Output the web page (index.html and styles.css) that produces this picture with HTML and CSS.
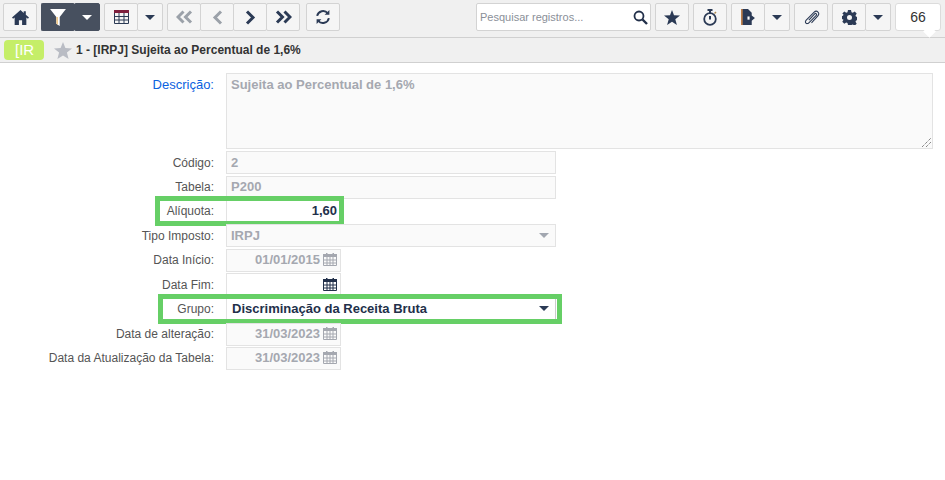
FILE: index.html
```html
<!DOCTYPE html>
<html lang="pt">
<head>
<meta charset="utf-8">
<title>Sujeita ao Percentual de 1,6%</title>
<link rel="stylesheet" href="styles.css">
</head>
<body>
<header class="toolbar">
  <div class="group">
    <button class="btn w34"><svg width="17" height="15" viewBox="0 0 16 14"><path class="ic" d="M8 0 0 7l1 1.200L2.500 7v7h4V9.500h3V14h4V7L15 8.200 16 7l-3-2.600V1h-2v1.700z"/></svg></button>
  </div>
  <div class="group gap4">
    <button class="btn dark w34 div-dark"><svg width="16" height="17" viewBox="0 0 14 15"><path fill="#fff" d="M0 0h14L8.500 7v8l-3-2V7z"/><path fill="#f0c98c" d="M5.500 7H7v7l-1.500-1z"/></svg></button>
    <button class="btn dark w25 first-none"><i class="caret white"></i></button>
  </div>
  <div class="group gap4">
    <button class="btn w33"><svg width="15" height="14" viewBox="0 0 15 14"><path fill="#7d1f3d" d="M0 0h15v3H0z"/><path fill="none" stroke="#2b3a55" d="M.5 3v10.500h14V3M.5 6.500h14M.5 10h14M5 3v10.500M10 3v10.500"/></svg></button>
    <button class="btn w25 first-none"><i class="caret"></i></button>
  </div>
  <div class="group gap4">
    <button class="btn w33"><svg width="17" height="14" viewBox="0 0 17 14"><path class="chev mute" d="M7.500 1.500 2 7l5.500 5.500M15 1.500 9.500 7l5.500 5.500"/></svg></button>
    <button class="btn w33 first-none"><svg width="11" height="15" viewBox="0 0 11 15"><path class="chev mute" d="M9 1.500 3 7.500l6 6"/></svg></button>
    <button class="btn w33 first-none"><svg width="11" height="15" viewBox="0 0 11 15"><path class="chev" d="m2 1.500 6 6-6 6"/></svg></button>
    <button class="btn w33 first-none"><svg width="17" height="14" viewBox="0 0 17 14"><path class="chev" d="M2 1.500 7.500 7 2 12.500M9.500 1.500 15 7l-5.500 5.500"/></svg></button>
  </div>
  <div class="group gap6">
    <button class="btn w34"><svg width="16" height="16" viewBox="0 0 15 15"><path fill="none" stroke="#2b3a55" stroke-width="1.800" d="M2 6.500A5.700 5.700 0 0 1 12 4M13 8.500A5.700 5.700 0 0 1 3 11"/><path class="ic" d="M13.500 1v4.500H9zM1.500 14V9.500H6z"/></svg></button>
  </div>
  <div class="spacer"></div>
  <div class="search"><span>Pesquisar registros...</span><svg width="15" height="15" viewBox="0 0 15 15"><circle cx="6" cy="6" r="4.500" fill="none" stroke="#22304a" stroke-width="1.800"/><path stroke="#22304a" stroke-width="2.400" d="m9.500 9.500 4.500 4.500"/></svg></div>
  <button class="btn w34 ml4"><svg width="16" height="15" viewBox="0 0 16 15"><path class="ic" d="m8 0 2 5.300 6 .3-4.700 3.600L12.900 15 8 11.700 3.100 15l1.600-5.800L0 5.600l6-.3z"/></svg></button>
  <button class="btn w34 ml4"><svg width="15" height="17" viewBox="0 0 15 17"><circle cx="7" cy="10" r="5.800" fill="none" stroke="#2b3a55" stroke-width="1.800"/><path stroke="#2b3a55" stroke-width="2" d="M4.500 1h5M7 2v2M7 7v3.500"/><path stroke="#b08a50" stroke-width="1.500" d="m11.500 4.500 1.500-1.500"/></svg></button>
  <div class="group ml4">
    <button class="btn w33"><svg width="14" height="16" viewBox="0 0 13 15"><path class="ic" d="M0 0h6.500L10 3.500V6l3 2.500L10 11v4H0z"/><path fill="#c8844a" d="M0 0h1.500v15H0z"/><path fill="#fff" d="M6 7h2v3H6z"/></svg></button>
    <button class="btn w26 first-none"><i class="caret"></i></button>
  </div>
  <button class="btn w34 ml4"><svg width="17" height="17" viewBox="0 0 16 16"><path fill="none" stroke="#2b3a55" stroke-width="1" d="M5.500 10.500 11 4.500c1-1 2.500.5 1.500 1.500L5.500 13c-2 2-4.500-.5-2.500-2.500L10.500 3c2.500-2.500 6 1 3.500 3.500L8 13"/></svg></button>
  <div class="group ml4">
    <button class="btn w33"><svg width="15" height="15" viewBox="0 0 15 15"><path class="ic" fill-rule="evenodd" d="M6 0h3l.5 2.200 1.300.5 1.900-1.200 2 2-1.200 1.900.5 1.300 2 .3v3l-2 .5-.5 1.300 1.200 1.900-2 2-1.900-1.200-1.300.5L9 15H6l-.5-2-1.300-.5-1.900 1.200-2-2 1.200-1.900L1 9.500 0 9V6l1-.3.500-1.300L.3 3.500l2-2 1.900 1.200 1.300-.5zM7.500 5a2.500 2.500 0 1 0 0 5 2.500 2.500 0 0 0 0-5z"/></svg></button>
    <button class="btn w26 first-none"><i class="caret"></i></button>
  </div>
  <div class="count">66</div>
</header>

<div class="subbar">
  <span class="badge">[IR</span>
  <svg class="fav" width="18" height="17" viewBox="0 0 18 17"><path fill="#b9bcc4" d="m9 0 2.400 6 6.600.4-5.100 4.100L14.600 17 9 13.400 3.400 17l1.700-6.500L0 6.400 6.600 6z"/></svg>
  <span class="title">1 - [IRPJ] Sujeita ao Percentual de 1,6%</span>
</div>

<main class="form">
  <div class="row r-desc">
    <label class="lbl req">Descrição:</label>
    <div class="field textarea ro">Sujeita ao Percentual de 1,6%<svg class="grip" width="9" height="9" viewBox="0 0 9 9"><path stroke="#555" stroke-dasharray="1 1" d="m0 9 9-9M4 9l5-5"/></svg></div>
  </div>
  <div class="row"><label class="lbl">Código:</label><div class="field ro w330">2</div></div>
  <div class="row"><label class="lbl">Tabela:</label><div class="field ro w330">P200</div></div>
  <div class="row">
    <label class="lbl">Alíquota:</label><div class="field edit num w114">1,60</div>
    <span class="hl hl-a"></span>
  </div>
  <div class="row"><label class="lbl">Tipo Imposto:</label><div class="field ro w330 sel">IRPJ<i class="caret mute"></i></div></div>
  <div class="row"><label class="lbl">Data Início:</label><div class="field ro date">01/01/2015<svg class="cal" width="14" height="13" viewBox="0 0 14 13"><use href="#cal"/></svg></div></div>
  <div class="row"><label class="lbl">Data Fim:</label><div class="field edit date"><svg class="cal dk" width="14" height="13" viewBox="0 0 14 13"><use href="#cal"/></svg></div></div>
  <div class="row r-grupo">
    <label class="lbl">Grupo:</label><div class="field edit sel grupo">Discriminação da Receita Bruta<i class="caret"></i></div>
    <span class="hl hl-g"></span>
  </div>
  <div class="row"><label class="lbl">Data de alteração:</label><div class="field ro date">31/03/2023<svg class="cal" width="14" height="13" viewBox="0 0 14 13"><use href="#cal"/></svg></div></div>
  <div class="row"><label class="lbl">Data da Atualização da Tabela:</label><div class="field ro date">31/03/2023<svg class="cal" width="14" height="13" viewBox="0 0 14 13"><use href="#cal"/></svg></div></div>
</main>

<svg class="defs" width="0" height="0"><defs><g id="cal"><path fill="currentColor" d="M0 1h14v3H0zM3 0h1.500v2H3zM9.500 0H11v2H9.500z"/><path fill="none" stroke="currentColor" d="M.5 4v8.500h13V4M.5 7h13M.5 10h13M4 4v8.500M7 4v8.500M10 4v8.500"/></g></defs></svg>
</body>
</html>
```
FILE: styles.css
```css
* { box-sizing: border-box; }
html, body { margin: 0; padding: 0; }
body {
  width: 945px; height: 480px; overflow: hidden; background: #fff;
  font-family: "Liberation Sans", Arial, sans-serif; font-size: 12px; color: #22304a;
}
.toolbar {
  display: flex; align-items: flex-start; height: 38px; padding: 3px 4px 0 3px;
  background: #f0f0f0; border-bottom: 1px solid #d0d0d0;
}
.group { display: flex; }
.gap4 { margin-left: 4px; }
.gap6 { margin-left: 6px; }
.ml4 { margin-left: 4px; }
.spacer { flex: 1; }
.btn {
  display: flex; align-items: center; justify-content: center;
  height: 28px; padding: 0; background: #f5f5f5;
  border: 1px solid #d3d3d3; border-radius: 2px;
}
.btn.dark { background: #47505f; border-color: #47505f; }
.btn.div-dark { border-right-color: #5c6472; }
.first-none { margin-left: -1px; }
.w34 { width: 34px; }
.w33 { width: 34px; }
.w25 { width: 26px; }
.w26 { width: 26px; }
.ic { fill: #2b3a55; }
.chev { fill: none; stroke: #2b3a55; stroke-width: 3; }
.chev.mute { stroke: #9ba1a9; }
.caret {
  display: block; width: 0; height: 0;
  border-left: 5px solid transparent; border-right: 5px solid transparent;
  border-top: 5px solid #2b3a55;
}
.caret.white { border-top-color: #fff; }
.caret.mute { border-top-color: #a2a7b0; }
.search {
  display: flex; align-items: center; justify-content: space-between;
  width: 175px; height: 28px; padding: 0 2px 0 3px; background: #fff;
  border: 1px solid #d3d3d3; border-radius: 2px; color: #8a8f98; font-size: 11px;
}
.count {
  position: relative; width: 46px; height: 28px; margin-left: 4px; background: #fff;
  border: 1px solid #dcdcdc; border-radius: 3px; text-align: center; line-height: 26px;
  color: #333; font-size: 14px;
}
.count::after {
  content: ""; position: absolute; right: 6px; bottom: -6px; width: 9px; height: 9px;
  background: #fff; transform: rotate(45deg);
}
.subbar {
  display: flex; align-items: center; height: 25px; padding-left: 4px;
  background: #f0f0f0; border-bottom: 1px solid #d0d0d0;
}
.badge {
  width: 40px; height: 20px; padding-left: 11px; background: #c5ee68; border-radius: 4px;
  color: #fff; font-size: 15px; line-height: 20px;
}
.fav { margin-left: 10px; }
.title { margin-left: 4px; font-weight: bold; color: #333; }
.form { display: flex; flex-direction: column; padding-top: 10px; }
.row { position: relative; display: flex; align-items: center; height: 24.400px; }
.r-desc { height: 77.500px; align-items: flex-start; }
.lbl { width: 214px; margin-right: 12px; text-align: right; color: #555; }
.lbl.req { margin-top: 4px; color: #0b62e0; font-size: 13px; }
.field {
  display: flex; align-items: center; height: 23px; padding: 0 4px 1px;
  border: 1px solid #e3e3e3; font-size: 13px; font-weight: bold; white-space: nowrap;
}
.ro { background: #fafafa; color: #a5a8b0; }
.edit { background: #fff; color: #22304a; }
.textarea { position: relative; width: 707px; height: 76px; align-items: flex-start; padding-top: 3px; }
.grip { position: absolute; right: 1px; bottom: 1px; }
.w330 { width: 330px; }
.w114 { width: 114px; }
.num { justify-content: flex-end; padding-right: 2px; }
.sel { justify-content: space-between; padding-right: 6px; }
.date { width: 115px; justify-content: flex-end; padding-right: 3px; }
.cal { margin-left: 3px; color: #a5a8b0; }
.cal.dk { color: #22304a; }
.grupo { width: 330px; border-right: 1px solid #ccc; padding-left: 5px; }
.r-grupo { height: 25px; }
.hl { position: absolute; border: 5px solid #66cf66; pointer-events: none; }
.hl-a { left: 155px; top: -3px; width: 189px; height: 30px; }
.hl-g { left: 158px; top: -3px; width: 404px; height: 30px; }
.defs { position: absolute; }
```
